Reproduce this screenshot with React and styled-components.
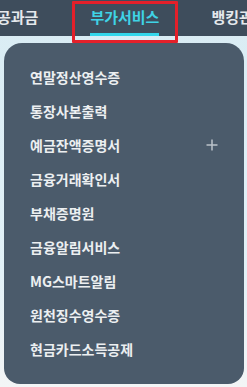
import React from 'react'
import styled, { createGlobalStyle } from 'styled-components'

const Global = createGlobalStyle`
    html, body {
        margin: 0;
        padding: 0;
        background: #dbedf5;
        font-family: "Noto Sans CJK KR", "Noto Sans", sans-serif;
    }
`;

const Page = styled.div`
    width: 247px;
    height: 387px;
    overflow: hidden;
    background: linear-gradient(180deg, #d9ecf4 0%, #e2f1f7 70%, #f3f5f6 100%);
`;

const TopBar = styled.nav`
    height: 36px;
    background-color: #3e4d5c;
    display: flex;
    align-items: stretch;
    gap: 52px;
    margin-left: -3px;
    white-space: nowrap;
    position: relative;
    z-index: 2;
`;

const Tab = styled.div`
    position: relative;
    flex-shrink: 0;
    display: flex;
    align-items: center;
    padding-bottom: 4px;
    font-size: 15px;
    font-weight: 700;
    color: ${props => props.active ? "#3fd3e6" : "#e4e8ec"};
    &::after {
        content: "";
        display: ${props => props.active ? "block" : "none"};
        position: absolute;
        left: 0;
        right: 0;
        bottom: 0;
        height: 3px;
        background: #33d6ea;
    }
`;

const Highlight = styled.span`
    position: absolute;
    left: -18px;
    right: -19px;
    top: 1px;
    bottom: -7px;
    border: 3px solid #e4202a;
    border-radius: 1px;
    pointer-events: none;
`;

const Content = styled.div`
    padding: 7px 3px 4px 4px;
`;

const Panel = styled.ul`
    list-style: none;
    margin: 0;
    padding: 17px 26px 18px 26px;
    background-color: #4b5b6b;
    border-radius: 18px 18px 16px 16px;
`;

const Item = styled.li`
    height: 34px;
    display: flex;
    align-items: center;
    justify-content: space-between;
    font-size: 14px;
    font-weight: 700;
    color: #eceff1;
`;

const Plus = () => (
    <svg width="12" height="12" viewBox="0 0 12 12">
        <path d="M6 0.5V11.5M0.5 6H11.5" stroke="#bcc3ca" strokeWidth="1.5" fill="none" />
    </svg>
)

const tabs = [
    { label: "공과금" },
    { label: "부가서비스", active: true },
    { label: "뱅킹관리" },
]

const items = [
    { label: "연말정산영수증" },
    { label: "통장사본출력" },
    { label: "예금잔액증명서", more: true },
    { label: "금융거래확인서" },
    { label: "부채증명원" },
    { label: "금융알림서비스" },
    { label: "MG스마트알림" },
    { label: "원천징수영수증" },
    { label: "현금카드소득공제" },
]

export default function App() {
    return (
        <Page>
            <Global />
            <TopBar>
                {tabs.map((t, i) => (
                    <Tab key={i} active={t.active}>
                        {t.label}
                        {t.active && <Highlight />}
                    </Tab>
                ))}
            </TopBar>
            <Content>
                <Panel>
                    {items.map((elt, i) => (
                        <Item key={i}>
                            <span>{elt.label}</span>
                            {elt.more && <Plus />}
                        </Item>
                    ))}
                </Panel>
            </Content>
        </Page>
    )
}
